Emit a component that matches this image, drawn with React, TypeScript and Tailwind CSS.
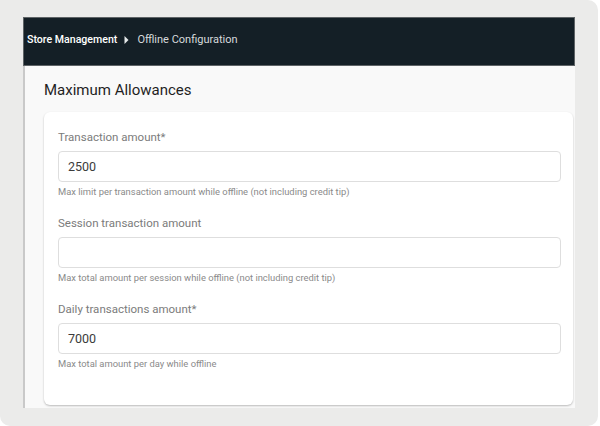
import React from 'react';

const fields = [
  { label: 'Transaction amount*', value: '2500', help: 'Max limit per transaction amount while offline (not including credit tip)' },
  { label: 'Session transaction amount', value: '', help: 'Max total amount per session while offline (not including credit tip)' },
  { label: 'Daily transactions amount*', value: '7000', help: 'Max total amount per day while offline' },
];

const Field = ({ label, value, help }: { label: string; value: string; help: string }) => (
  <div className="flex flex-col mb-[18px] last:mb-0">
    <label className="text-[11.5px] leading-[16px] text-[#7b7b7b] mb-[6px]">{label}</label>
    <input
      readOnly
      value={value}
      className="h-[31px] w-full border border-[#dedede] rounded-[4px] bg-white pl-[9px] text-[12.5px] text-[#3c3c3c] outline-none font-[Roboto]"
    />
    <span className="mt-[4px] text-[9.4px] leading-[11px] text-[#8a8a8a]">{help}</span>
  </div>
);

const App = () => {
  return (
    <div className="w-[600px] h-[426px] bg-white font-[Roboto,'Liberation_Sans',sans-serif]">
      <div className="w-[598px] h-[426px] bg-[#ebebea] rounded-tr-[10px] rounded-b-[10px] pt-[17px] pl-[23px] pr-[23px] pb-[18px]">
        <div className="flex flex-col h-full">
          <header className="h-[49px] shrink-0 bg-[#141f26] border border-[#5e6366] flex items-center pl-[3px] pb-[3px]">
            <span className="text-[10.6px] font-medium text-white">Store Management</span>
            <svg width="5" height="8" viewBox="0 0 5 8" className="block shrink-0 ml-[7px] mr-[8px]">
              <path d="M0.5 0 L4.5 4 L0.5 8 Z" fill="#e6e9ea" />
            </svg>
            <span className="text-[11px] text-[#d6dadc]">Offline Configuration</span>
          </header>
          <main className="flex-1 bg-[#f9f9f9] border-l-2 border-[#c9c9c9] pl-[19px] pr-[2px] pb-[4px] overflow-hidden">
            <h1 className="text-[15px] leading-[20px] text-[#1f1f1f] mt-[14px] mb-[12px]">Maximum Allowances</h1>
            <div className="bg-white rounded-[6px] shadow-[0_1px_2px_rgba(0,0,0,0.25)] pl-[14px] pr-[12px] pt-[17px] pb-[36px]">
              {fields.map((f) => (
                <Field key={f.label} {...f} />
              ))}
            </div>
          </main>
        </div>
      </div>
    </div>
  );
};

export default App;
